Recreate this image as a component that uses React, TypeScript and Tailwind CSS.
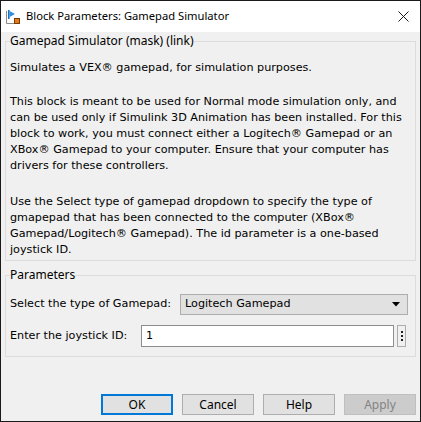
import React from "react";

const body = { fontFamily: '"DejaVu Sans", Verdana, sans-serif' };
const ui = { fontFamily: '"Noto Sans", "Open Sans", sans-serif' };

function TitleIcon() {
  return (
    <svg width="16" height="16" viewBox="0 0 16 16">
      <path d="M1.5 2 V14.5 H14" fill="none" stroke="#8a8a8a" strokeWidth="1" />
      <rect x="3" y="1" width="1.6" height="9" fill="#1f6fc5" />
      <polygon points="4.6,2 10,5 4.6,8" fill="#2d8ee0" />
      <rect x="9.5" y="9.5" width="5" height="5" fill="#e07a1f" stroke="#7a3d00" strokeWidth="1" />
    </svg>
  );
}

function CloseIcon() {
  return (
    <svg width="11" height="11" viewBox="0 0 11 11">
      <path d="M0.5 0.5 L10.5 10.5 M10.5 0.5 L0.5 10.5" stroke="#1a1a1a" strokeWidth="1" />
    </svg>
  );
}

function Btn({ children, primary, disabled }: { children: React.ReactNode; primary?: boolean; disabled?: boolean }) {
  const cls = primary
    ? "border-2 border-[#0078d7] bg-[#e1e1e1] text-black"
    : disabled
    ? "border border-[#bfbfbf] bg-[#cccccc] text-[#838383]"
    : "border border-[#adadad] bg-[#e1e1e1] text-black";
  return (
    <div className={`w-[72px] h-[21px] flex items-center justify-center text-[12px] leading-none ${cls}`} style={ui}>
      {children}
    </div>
  );
}

export default function App() {
  return (
    <div className="w-[421px] h-[422px] border border-[#1a1a1a] bg-[#f0f0f0] flex flex-col overflow-hidden">
      <div className="h-[31px] bg-white flex items-center pl-[4px] pr-[11px] shrink-0">
        <TitleIcon />
        <span className="ml-[5px] text-[11.2px] text-black" style={ui}>
          Block Parameters: Gamepad Simulator
        </span>
        <div className="ml-auto flex items-center">
          <CloseIcon />
        </div>
      </div>

      <div className="px-[4px] flex flex-col flex-1">
        <fieldset className="border border-[#dcdcdc] px-[4px] pb-[2px] mt-[1px]">
          <legend className="text-[12px] leading-[16px] text-black px-0" style={ui}>
            Gamepad Simulator (mask) (link)
          </legend>
          <div className="mt-[11px] text-[11.2px] leading-[16px] text-black" style={body}>
            <p>Simulates a VEX® gamepad, for simulation purposes.</p>
            <p className="mt-[18px]">
              This block is meant to be used for Normal mode simulation only, and can be used only if Simulink 3D
              Animation has been installed. For this block to work, you must connect either a Logitech® Gamepad or an
              XBox® Gamepad to your computer. Ensure that your computer has drivers for these controllers.
            </p>
            <p className="mt-[20px]">
              Use the Select type of gamepad dropdown to specify the type of gmapepad that has been connected to the
              computer (XBox® Gamepad/Logitech® Gamepad). The id parameter is a one-based joystick ID.
            </p>
          </div>
        </fieldset>

        <fieldset className="border border-[#dcdcdc] pl-[4px] pr-[7px] pb-[9px] mt-[6px]">
          <legend className="text-[12px] leading-[16px] text-black px-0" style={ui}>
            Parameters
          </legend>
          <div className="mt-[11px] flex items-center text-[11.2px] text-black" style={body}>
            <span className="whitespace-nowrap w-[170px]">Select the type of Gamepad:</span>
            <div className="flex-1 h-[21px] border border-[#adadad] bg-[#e1e1e1] flex items-center pl-[4px] pr-[7px]">
              <span>Logitech Gamepad</span>
              <svg className="ml-auto" width="8" height="5" viewBox="0 0 8 5">
                <polygon points="0,0 8,0 4,4.5" fill="#000" />
              </svg>
            </div>
          </div>
          <div className="mt-[10px] flex items-center text-[11.2px] text-black" style={body}>
            <span className="whitespace-nowrap w-[131px]">Enter the joystick ID:</span>
            <div className="flex-1 h-[22px] border border-[#8d8d8d] bg-white flex items-center pl-[4px]">
              <span>1</span>
            </div>
            <div className="ml-[3px] w-[9px] h-[22px] border border-[#adadad] bg-[#f0f0f0] flex flex-col items-center justify-center gap-[2px] mr-[2px]">
              <div className="w-[2px] h-[2px] bg-[#222]" />
              <div className="w-[2px] h-[2px] bg-[#222]" />
              <div className="w-[2px] h-[2px] bg-[#222]" />
            </div>
          </div>
        </fieldset>

        <div className="mt-auto mb-[6px] flex justify-end gap-[9px]">
          <Btn primary>OK</Btn>
          <Btn>Cancel</Btn>
          <Btn>Help</Btn>
          <Btn disabled>Apply</Btn>
        </div>
      </div>
    </div>
  );
}
